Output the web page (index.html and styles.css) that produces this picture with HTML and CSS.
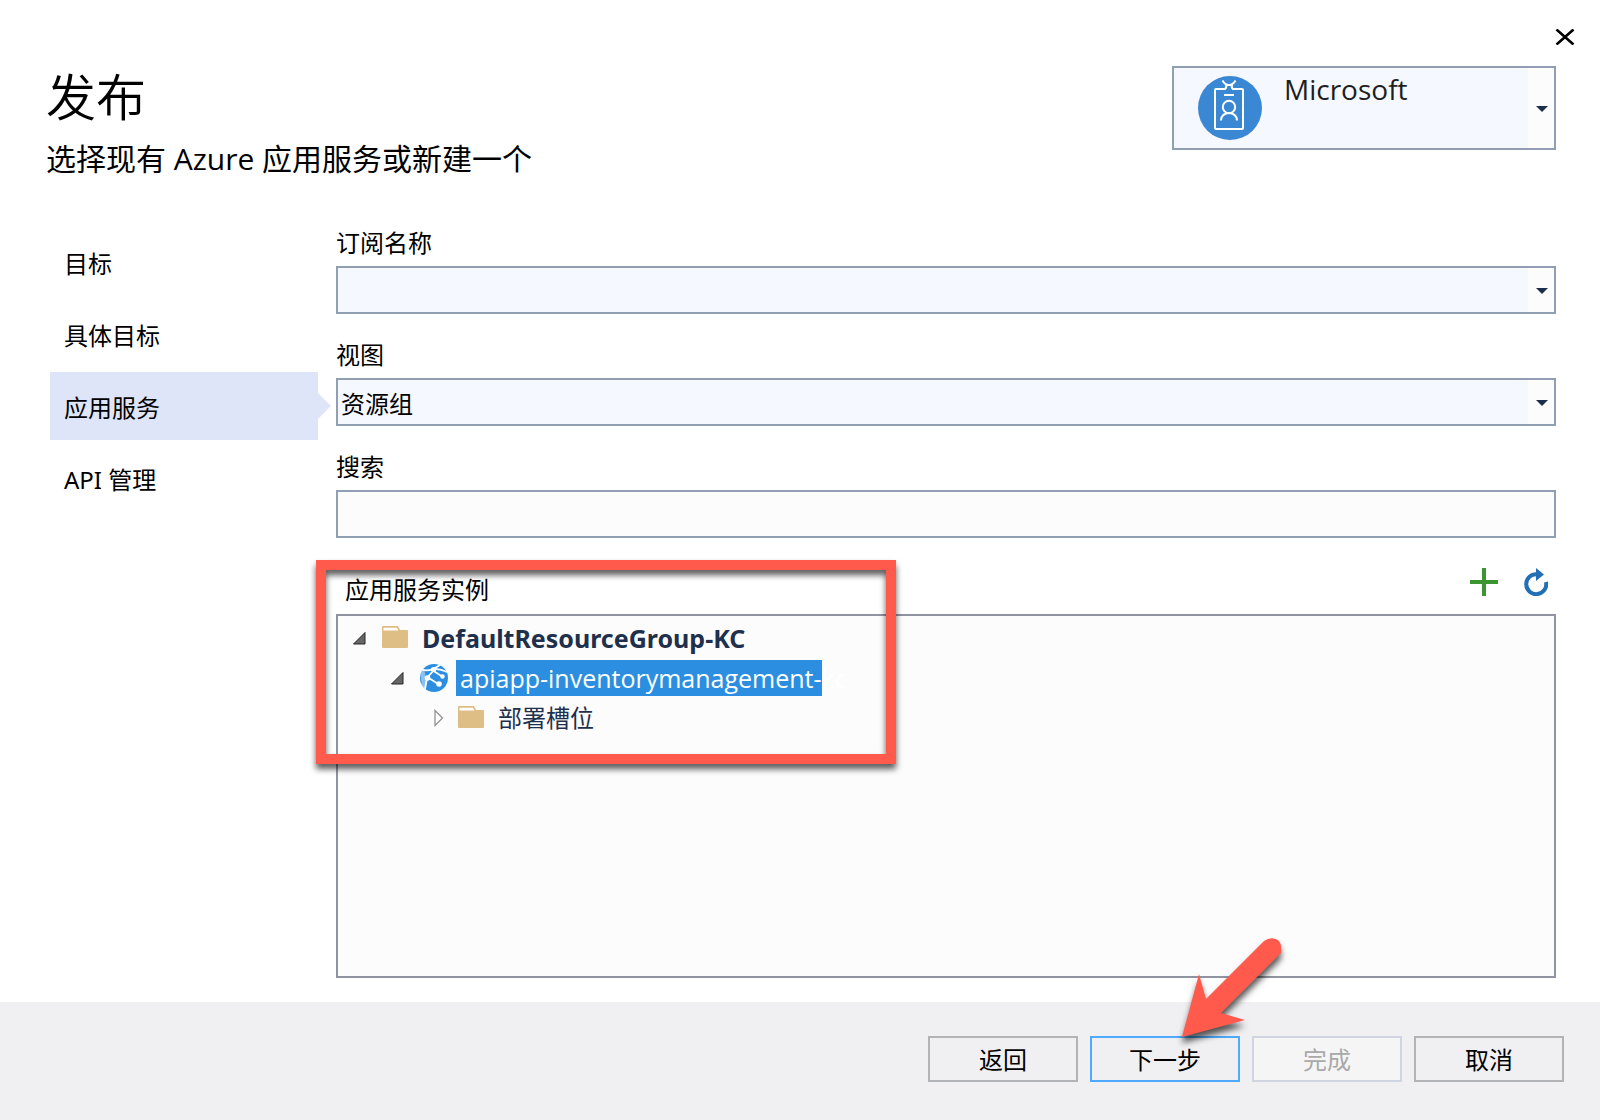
FILE: index.html
```html
<!DOCTYPE html>
<html lang="zh-CN">
<head>
<meta charset="utf-8">
<meta name="viewport" content="width=device-width, initial-scale=1">
<title>发布</title>
<link rel="stylesheet" href="styles.css">
</head>
<body>
<div class="dialog">
  <div class="titlebar">
    <button class="close" type="button" aria-label="关闭">
      <svg width="20" height="16" viewBox="0 0 20 16" aria-hidden="true"><path d="M1.500 0.500 18.500 15.500M18.500 0.500 1.500 15.500" stroke="#000" stroke-width="2.600" fill="none"/></svg>
    </button>
  </div>
  <header class="header">
    <div class="headings">
      <h1>发布</h1>
      <p>选择现有 Azure 应用服务或新建一个</p>
    </div>
    <button class="account" type="button" aria-haspopup="listbox">
      <svg class="avatar" width="64" height="64" viewBox="0 0 64 64" aria-hidden="true">
        <circle cx="32" cy="32" r="32" fill="#3a87d3"/>
        <g fill="none" stroke="#fff" stroke-width="2">
          <path d="M27 13H18q-1 0-1 1V52q0 1 1 1H44q1 0 1-1V14q0-1-1-1H35"/>
          <path d="M24.500 4.500Q27 9 31 9T37.500 4.500M26.500 13.500Q29 12 28 8.500M35.500 13.500Q33 12 34 8.500"/>
          <path d="M26 19H36"/>
          <circle cx="31" cy="31" r="6.200"/>
          <path d="M23 44.500C23 34.500 39 34.500 39 44.500"/>
        </g>
      </svg>
      <span class="account-name">Microsoft</span>
      <span class="drop"></span>
    </button>
  </header>
  <main class="body">
    <nav class="steps">
      <a href="#target">目标</a>
      <a href="#specific">具体目标</a>
      <a href="#service" class="current" aria-current="step">应用服务</a>
      <a href="#api">API 管理</a>
    </nav>
    <form class="form" id="service">
      <div class="field">
        <label for="subscription">订阅名称</label>
        <div class="select"><select id="subscription"><option></option></select><span class="drop"></span></div>
      </div>
      <div class="field">
        <label for="view">视图</label>
        <div class="select"><select id="view"><option>资源组</option></select><span class="drop"></span></div>
      </div>
      <div class="field">
        <label for="search">搜索</label>
        <input id="search" type="text">
      </div>
      <section class="instances" aria-labelledby="instances-title">
        <div class="instances-head">
          <h2 id="instances-title">应用服务实例</h2>
          <button class="tool" type="button" aria-label="新建">
            <svg width="28" height="28" viewBox="0 0 28 28" aria-hidden="true"><path d="M14 0V28M0 14H28" stroke="#3b9632" stroke-width="4"/></svg>
          </button>
          <button class="tool" type="button" aria-label="刷新">
            <svg width="24" height="28" viewBox="0 0 24 28" aria-hidden="true"><path d="M13 6.200A10 10 0 1 0 22 14" stroke="#236fb5" stroke-width="4" fill="none"/><path d="M12 0 20 6.500 12 13Z" fill="#236fb5"/></svg>
          </button>
        </div>
        <ul class="tree" role="tree">
          <li class="node level1" role="treeitem" aria-expanded="true">
            <svg class="twisty" width="14" height="14" viewBox="0 0 14 14" aria-hidden="true"><path d="M1.500 13H13V1.500Z" fill="#666" stroke="#262626"/></svg>
            <svg class="icon" width="28" height="24" viewBox="0 0 28 24" aria-hidden="true"><path d="M1 22V1Q1 0 2 0H17L19 4H26Q27 4 27 5V21Q27 22 26 22H2Q1 22 1 21Z" fill="#dfbe86"/><path d="M2.500 1.800H16L17.200 4.500H2.500Z" fill="#fff"/></svg>
            <strong>DefaultResourceGroup-KC</strong>
          </li>
          <li class="node level2" role="treeitem" aria-expanded="true" aria-selected="true">
            <svg class="twisty" width="14" height="14" viewBox="0 0 14 14" aria-hidden="true"><path d="M1.500 13H13V1.500Z" fill="#666" stroke="#262626"/></svg>
            <svg class="icon" width="28" height="28" viewBox="0 0 28 28" aria-hidden="true">
              <circle cx="14" cy="14" r="14" fill="#2c8ee0"/>
              <g fill="none" stroke="#fff" stroke-width="1.800"><path d="M2 5.500Q9 8.500 20 1M13 5.500Q19 4 27 8M14 6 7 14 5 25M12 6 23 13M8 13.500 19 20.500"/></g>
              <path d="M0 8 4 5 6 14 5.500 26 2 22Z" fill="#fff" opacity=".45"/>
              <g fill="#fff"><circle cx="13.500" cy="5.500" r="2.600"/><circle cx="7.500" cy="14" r="2.800"/><circle cx="19" cy="20" r="2.800"/><circle cx="22.500" cy="12.500" r="2.200"/></g>
            </svg>
            <span class="picked"><mark>apiapp-inventorymanagement-</mark>kc</span>
          </li>
          <li class="node level3" role="treeitem" aria-expanded="false">
            <svg class="twisty" width="12" height="18" viewBox="0 0 12 18" aria-hidden="true"><path d="M3 1.500V16.500L10.500 9Z" fill="#fff" stroke="#929292" stroke-width="1.300"/></svg>
            <svg class="icon" width="28" height="24" viewBox="0 0 28 24" aria-hidden="true"><path d="M1 22V1Q1 0 2 0H17L19 4H26Q27 4 27 5V21Q27 22 26 22H2Q1 22 1 21Z" fill="#dfbe86"/><path d="M2.500 1.800H16L17.200 4.500H2.500Z" fill="#fff"/></svg>
            <span>部署槽位</span>
          </li>
        </ul>
        <div class="highlight-frame" aria-hidden="true"></div>
      </section>
    </form>
  </main>
  <footer class="footer">
    <button type="button">返回</button>
    <div class="next">
      <button type="button" class="primary">下一步</button>
      <svg class="arrow" width="110" height="116" viewBox="0 0 110 116" aria-hidden="true"><path d="M2 101 19 38 26 63 84 5Q91 0 98 4Q101 7 101 10V17L41 77 65 84Z" fill="#ff5a4b"/></svg>
    </div>
    <button type="button" disabled>完成</button>
    <button type="button">取消</button>
  </footer>
</div>
</body>
</html>
```
FILE: styles.css
```css
* { box-sizing: border-box; }
body {
  margin: 0;
  background: #fff;
  color: #000;
  font: 24px/32px "Noto Sans", "Noto Sans CJK SC", sans-serif;
}
h1, h2, p, ul { margin: 0; padding: 0; font-weight: 400; }
button, input, select { font: inherit; color: inherit; border-radius: 0; }
button { cursor: pointer; }

.dialog { min-height: 100vh; display: flex; flex-direction: column; }

.titlebar { display: flex; justify-content: flex-end; padding: 29px 25px 0; }
.close { display: flex; padding: 0; border: 0; background: none; }

.header {
  display: flex;
  justify-content: space-between;
  align-items: flex-start;
  padding: 21px 44px 0 46px;
}
.headings h1 { font-size: 50px; line-height: 62px; font-weight: 350; }
.headings p { font: 30px/62px "Open Sans", "Noto Sans CJK SC", sans-serif; }

.account {
  display: flex;
  align-items: stretch;
  width: 384px;
  height: 84px;
  padding: 0;
  border: 2px solid #919fb2;
  background: #f5f8ff;
  color: #1e1e1e;
}
.avatar { margin: 8px 22px 0 24px; flex: none; }
.account-name { flex: 1; text-align: left; font: 28px/42px "Open Sans", sans-serif; }

.drop {
  display: flex;
  align-items: center;
  justify-content: center;
  width: 26px;
  padding: 2px 0 0 2px;
  background: #fcfcfd;
  pointer-events: none;
}
.drop::after {
  content: "";
  border: 6px solid transparent;
  border-top-color: #1b2f4d;
  border-bottom: 0;
}

.body { flex: 1; display: flex; gap: 18px; padding: 24px 44px 24px 50px; }
.steps { width: 268px; flex: none; display: flex; flex-direction: column; gap: 4px; padding-top: 14px; }
.steps a {
  height: 68px;
  padding: 4px 14px 0;
  line-height: 64px;
  color: #000;
  text-decoration: none;
  position: relative;
}
.steps .current { background: #dfe5f9; }
.steps .current::after {
  content: "";
  position: absolute;
  left: 100%;
  top: 21px;
  border: 13px solid transparent;
  border-left-color: #dfe5f9;
  border-right: 0;
}

.form { flex: 1; display: flex; flex-direction: column; }
.field { display: flex; flex-direction: column; height: 112px; }
.field label { height: 52px; padding-top: 13px; }
.field input, .select { height: 48px; border: 2px solid #919fb2; }
.field input { padding: 0 4px; background: #fcfcfd; }
.select { display: grid; grid-template-columns: 1fr 26px; background: #f5f8ff; }
.select select {
  grid-area: 1 / 1 / 2 / 3;
  appearance: none;
  border: 0;
  padding: 3px 30px 0 3px;
  background: none;
}
.select .drop { grid-area: 1 / 2 / 2 / 3; }

.instances { flex: 1; display: flex; flex-direction: column; position: relative; }
.instances-head { display: flex; height: 64px; padding: 18px 8px 0 9px; gap: 26px; align-items: flex-start; }
.instances-head h2 { flex: 1; font-size: 24px; line-height: 44px; }
.tool { display: flex; padding: 0; border: 0; background: none; }

.tree { flex: 1; min-height: 160px; padding: 2px 0; border: 2px solid #9093a0; background: #fcfcfd; list-style: none; color: #1e304b; }
.node { display: flex; align-items: center; height: 40px; }
.level1 { padding-left: 14px; }
.level2 { padding-left: 52px; }
.level3 { padding-left: 94px; }
.twisty { flex: none; margin-right: 15px; }
.level2 .twisty { margin-right: 16px; }
.level3 .twisty { margin-right: 13px; }
.icon { flex: none; }
.node strong, .level3 span { padding-left: 13px; }
.node strong { font-size: 25px; }
.picked { margin-left: 8px; font: 25px/36px "Open Sans", sans-serif; color: #fff; white-space: nowrap; }
.picked mark { display: inline-block; padding-left: 4px; background: #2c8ee0; color: #fff; }

.highlight-frame {
  position: absolute;
  left: -20px;
  top: 10px;
  width: 580px;
  height: 204px;
  border: 10px solid #ff5a4b;
  filter: drop-shadow(0 5px 3px rgba(0, 0, 0, .65));
  pointer-events: none;
}

.footer { display: flex; justify-content: flex-end; gap: 12px; padding: 34px 36px 38px; background: #f0f0f3; }
.footer button { width: 150px; height: 46px; padding: 2px 0 0; border: 2px solid #b2b3b7; background: #f0f0f3; }
.footer .primary { border-color: #4daafc; }
.footer button:disabled { border-color: #d1d5e1; background: #f5f5f6; color: #a9a9a9; }
.next { position: relative; }
.arrow {
  position: absolute;
  left: 90px;
  top: -100px;
  filter: drop-shadow(0 6px 3px rgba(0, 0, 0, .65));
  pointer-events: none;
}
```
